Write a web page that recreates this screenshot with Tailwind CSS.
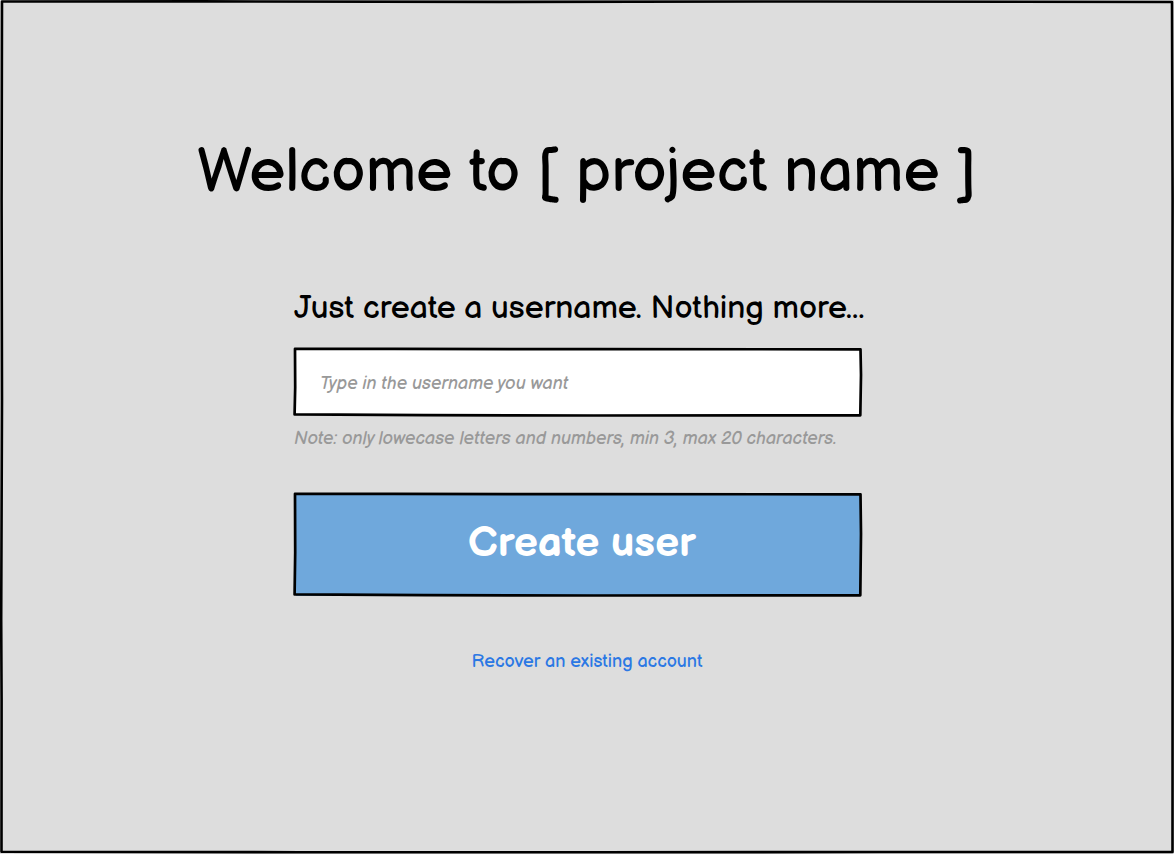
<!DOCTYPE html>
<html lang="en">
<head>
<meta charset="utf-8">
<meta name="viewport" content="width=device-width, initial-scale=1">
<title>Create a username</title>
<script src="https://cdn.jsdelivr.net/npm/@tailwindcss/browser@4"></script>
</head>
<body class="bg-[#dddddd] text-black font-['Balsamiq_Sans','Inter',sans-serif]">
<main class="relative flex min-h-screen flex-col items-center px-4 pt-[137px] pb-16">
  <!-- Hand-drawn page frame -->
  <svg class="pointer-events-none absolute inset-0 h-full w-full" viewBox="0 0 1174 854" preserveAspectRatio="none" fill="none" stroke="#000" stroke-width="2.6" stroke-linejoin="round" aria-hidden="true">
    <path vector-effect="non-scaling-stroke" d="M2 1.5L200 1.4 500 1.9 820 1.5 1172 2 1172.6 200 1172.2 420 1172.6 640 1172.5 852 880 852 600 852.3 300 852.2 1.5 851.8 1.6 700 1.2 620 2 400 1.6 200Z"/>
  </svg>
  <h1 class="text-center text-[61px] leading-[72px] whitespace-nowrap">Welcome to [ project name ]</h1>
  <form class="mt-20 flex w-full max-w-[586px] flex-col" onsubmit="return false">
    <label for="username" class="text-[32px] leading-[40px] whitespace-nowrap">Just create a username. Nothing more...</label>
    <div class="relative mt-[18px] mr-[18px] h-[70px] p-[2px]">
      <input id="username" type="text" placeholder="Type in the username you want" aria-describedby="note" class="block h-full w-full bg-white px-6 pt-[2px] text-[18px] outline-none placeholder:text-[#999999] placeholder:italic">
      <svg class="pointer-events-none absolute inset-0 h-full w-full overflow-visible" viewBox="0 0 568 70" preserveAspectRatio="none" fill="none" stroke="#000" stroke-width="2.7" stroke-linejoin="round" aria-hidden="true">
        <path vector-effect="non-scaling-stroke" d="M1 1.8L100 1.8 300 2.2 566.5 2.3 567 28 566.3 68.3 300 68.5 130 68.2 .6 67.4 1.2 40Z"/>
      </svg>
    </div>
    <p id="note" class="mt-[10px] text-[18px] leading-[24px] whitespace-nowrap text-[#999999] italic">Note: only lowecase letters and numbers, min 3, max 20 characters.</p>
    <button type="submit" class="relative mt-[41px] mr-[18px] h-[106px] cursor-pointer bg-[#6fa8dc] bg-clip-content p-[2px]">
      <svg class="pointer-events-none absolute inset-0 h-full w-full overflow-visible" viewBox="0 0 568 106" preserveAspectRatio="none" fill="none" stroke="#000" stroke-width="2.7" stroke-linejoin="round" aria-hidden="true">
        <path vector-effect="non-scaling-stroke" d="M1 1.8L100 1.8 300 2.2 566.5 2.3 567 42 566.3 103.3 300 103.5 130 103.2 .6 102.4 1.2 60Z"/>
      </svg>
      <span class="block pb-[2px] pl-2 text-[42px] leading-[48px] font-bold text-white">Create user</span>
    </button>
    <a href="#" class="mt-[52px] self-center text-[18px] leading-[24px] text-[#2b78e4]">Recover an existing account</a>
  </form>
</main>
</body>
</html>
